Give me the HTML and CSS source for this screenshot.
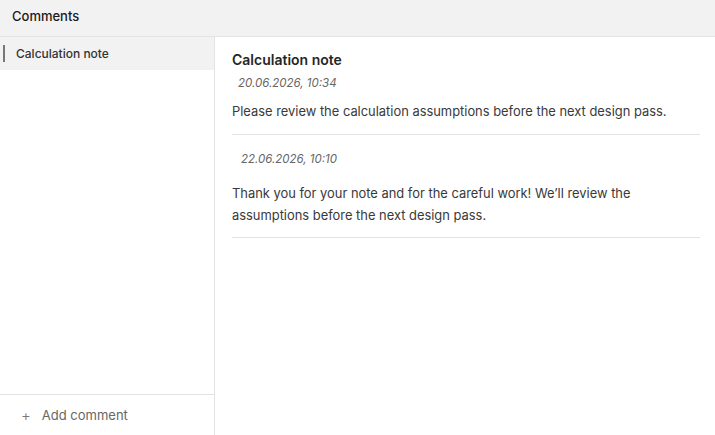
FILE: index.html
```html
<!DOCTYPE html>
<html>
<head>
<meta charset="utf-8">
<link rel="stylesheet" href="styles.css">
</head>
<body>
<div class="app">
  <header class="topbar">Comments</header>
  <div class="main">
    <aside class="sidebar">
      <div class="list">
        <div class="item active">Calculation note</div>
      </div>
      <div class="footer">
        <span class="plus">+</span>
        <span>Add comment</span>
      </div>
    </aside>
    <section class="content">
      <h1 class="title">Calculation note</h1>
      <div class="entry">
        <div class="date">20.06.2026, 10:34</div>
        <p class="text">Please review the calculation assumptions before the next design pass.</p>
      </div>
      <div class="entry reply">
        <div class="date">22.06.2026, 10:10</div>
        <p class="text">Thank you for your note and for the careful work! We’ll review the assumptions before the next design pass.</p>
      </div>
    </section>
  </div>
</div>
</body>
</html>
```

FILE: styles.css
```css
* { box-sizing: border-box; }
html, body { margin: 0; padding: 0; }
body {
  font-family: Inter, "Noto Sans", sans-serif;
  color: #333;
  background: #fff;
}
.app {
  width: 715px;
  height: 435px;
  display: flex;
  flex-direction: column;
}
.topbar {
  height: 37px;
  background: #f2f2f2;
  border-bottom: 1px solid #e3e3e3;
  padding: 0 12px 4px;
  display: flex;
  align-items: center;
  font-size: 13px;
  font-weight: 500;
  color: #1a1a1a;
}
.main {
  flex: 1;
  display: flex;
  min-height: 0;
}
.sidebar {
  width: 215px;
  border-right: 1px solid #e3e3e3;
  display: flex;
  flex-direction: column;
}
.list { flex: 1; }
.item {
  height: 33px;
  display: flex;
  align-items: center;
  padding-left: 16px;
  font-size: 12px;
  font-weight: 500;
  color: #333;
  position: relative;
}
.item.active { background: #f2f2f2; }
.item.active::before {
  content: "";
  position: absolute;
  left: 3px;
  top: 8px;
  width: 2px;
  height: 17px;
  background: #777;
}
.footer {
  height: 41px;
  border-top: 1px solid #e3e3e3;
  display: flex;
  align-items: center;
  padding-left: 21px;
  font-size: 13px;
  color: #666;
  gap: 11px;
}
.plus { font-size: 15px; color: #777; font-weight: 300; }
.content {
  flex: 1;
  padding: 14px 15px 0 17px;
}
.title {
  margin: 0;
  font-size: 14px;
  font-weight: 600;
  color: #262626;
  line-height: 18px;
}
.entry {
  border-bottom: 1px solid #e3e3e3;
}
.date {
  font-size: 11.5px;
  font-style: italic;
  color: #666;
  padding-left: 6px;
  margin-top: 7px;
  line-height: 14px;
}
.text {
  margin: 11px 0 11px;
  font-size: 12.9px;
  line-height: 22px;
  color: #3a3a3a;
}
.reply .date { padding-left: 9px; margin-top: 17px; }
.reply .text { margin: 17px 0 10px; }
```
